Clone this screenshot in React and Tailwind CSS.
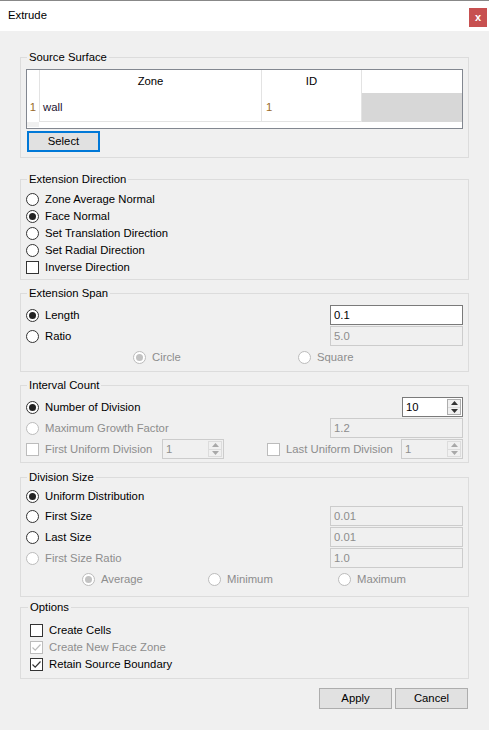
import { useState } from "react";

const FONT = "font-['Liberation_Sans',Arial,sans-serif]";

function Radio({ checked, disabled }) {
  return (
    <span
      className={`flex h-[13px] w-[13px] shrink-0 items-center justify-center rounded-full border bg-white ${
        disabled ? "border-[#bcbcbc]" : "border-[#333333]"
      }`}
    >
      {checked && (
        <span
          className={`h-[7px] w-[7px] rounded-full ${
            disabled ? "bg-[#c2c2c2]" : "bg-[#222222]"
          }`}
        />
      )}
    </span>
  );
}

function Check({ checked, disabled }) {
  return (
    <span
      className={`flex h-[13px] w-[13px] shrink-0 items-center justify-center border bg-white ${
        disabled ? "border-[#bcbcbc]" : "border-[#333333]"
      }`}
    >
      {checked && (
        <svg width="11" height="11" viewBox="0 0 11 11">
          <polyline
            points="1.5,5.5 4.2,8.2 9.5,2.5"
            fill="none"
            stroke={disabled ? "#bcbcbc" : "#333333"}
            strokeWidth="1.2"
          />
        </svg>
      )}
    </span>
  );
}

function Option({ type = "radio", checked, disabled, label, className = "" }) {
  return (
    <div className={`flex items-center gap-[6px] ${className}`}>
      {type === "radio" ? (
        <Radio checked={checked} disabled={disabled} />
      ) : (
        <Check checked={checked} disabled={disabled} />
      )}
      <span className={disabled ? "text-[#8d8d8d]" : "text-black"}>{label}</span>
    </div>
  );
}

function TextBox({ value, active }) {
  return (
    <div
      className={`flex h-[20px] w-[133px] items-center border px-[3px] ${
        active
          ? "border-[#7a7a7a] bg-white text-black"
          : "border-[#cccccc] bg-[#f0f0f0] text-[#8d8d8d]"
      }`}
    >
      {value}
    </div>
  );
}

function Spinner({ value, active, width = "w-[61px]" }) {
  const arrow = active ? "#333333" : "#a8a8a8";
  return (
    <div
      className={`flex h-[20px] ${width} items-center justify-between border pl-[3px] pr-[1px] ${
        active
          ? "border-[#7a7a7a] bg-white text-black"
          : "border-[#cccccc] bg-[#f0f0f0] text-[#8d8d8d]"
      }`}
    >
      <span>{value}</span>
      <div
        className={`flex h-[16px] w-[14px] flex-col border ${
          active ? "border-[#adadad] bg-[#f0f0f0]" : "border-[#dcdcdc] bg-[#f0f0f0]"
        }`}
      >
        <div className="flex flex-1 items-center justify-center border-b border-[#dcdcdc]">
          <svg width="7" height="4" viewBox="0 0 7 4">
            <polygon points="0,4 7,4 3.5,0" fill={arrow} />
          </svg>
        </div>
        <div className="flex flex-1 items-center justify-center">
          <svg width="7" height="4" viewBox="0 0 7 4">
            <polygon points="0,0 7,0 3.5,4" fill={arrow} />
          </svg>
        </div>
      </div>
    </div>
  );
}

function Group({ title, className = "", pad = "px-[5px]", legendPad = "ml-[1px]", children }) {
  return (
    <fieldset className={`ml-[20px] w-[449px] border border-[#dcdcdc] ${pad} ${className}`}>
      <legend className={`${legendPad} px-[2px] leading-[15px]`}>{title}</legend>
      {children}
    </fieldset>
  );
}

export default function App() {
  const [direction, setDirection] = useState("face");

  return (
    <div className={`${FONT} h-[730px] w-[489px] bg-[#f0f0f0] text-[11.3px] text-black`}>
      {/* title bar */}
      <div className="flex h-[31px] items-center justify-between border-t border-[#888888] bg-white pl-[8px] pr-[2px]">
        <span className="pb-[1px]">Extrude</span>
        <button className="mt-[2px] flex h-[19px] w-[18px] items-center justify-center bg-[#c75050] text-[11px] font-bold leading-none text-white">
          x
        </button>
      </div>

      <Group title="Source Surface" className="mt-[19px] pt-[4px] pb-[5px]">
        <div className="h-[60px] w-[437px] border border-[#828790] bg-white">
          <div className="grid grid-cols-[12px_1px_221px_1px_99px_1px_100px]">
            {/* header */}
            <div className="h-[23px]" />
            <div className="bg-[#e3e3e3]" />
            <div className="flex items-center justify-center">Zone</div>
            <div className="bg-[#e3e3e3]" />
            <div className="flex items-center justify-center">ID</div>
            <div className="bg-[#e3e3e3]" />
            <div />
            {/* row */}
            <div className="flex h-[29px] items-center justify-center text-[#9a6a2a]">1</div>
            <div className="bg-[#e3e3e3]" />
            <div className="flex items-center border-b border-[#e3e3e3] pl-[3px] text-[#1a1030]">wall</div>
            <div className="bg-[#e3e3e3]" />
            <div className="flex items-center border-b border-[#e3e3e3] pl-[4px] text-[#9a6a2a]">1</div>
            <div className="bg-[#e3e3e3]" />
            <div className="bg-[#d7d7d7]" />
            {/* filler */}
            <div className="h-[5px] bg-[#f0f0f0]" />
            <div />
            <div />
            <div />
            <div />
            <div />
            <div />
          </div>
        </div>
        <button className="ml-[1px] mt-[2px] flex h-[21px] w-[73px] items-center justify-center border-2 border-[#0078d7] bg-[#e1e1e1]">
          Select
        </button>
      </Group>

      <Group title="Extension Direction" className="mt-[14px] pt-[4px] pb-[3px]">
        {[
          ["zone", "Zone Average Normal"],
          ["face", "Face Normal"],
          ["trans", "Set Translation Direction"],
          ["radial", "Set Radial Direction"],
        ].map(([key, label]) => (
          <div key={key} onClick={() => setDirection(key)} className="cursor-default">
            <Option checked={direction === key} label={label} className="h-[17px]" />
          </div>
        ))}
        <Option type="check" label="Inverse Direction" className="h-[17px]" />
      </Group>

      <Group title="Extension Span" className="mt-[6px] pt-[4px] pb-[3px]">
        <div className="flex h-[21px] items-start justify-between">
          <Option checked label="Length" className="h-[20px]" />
          <TextBox value="0.1" active />
        </div>
        <div className="flex h-[21px] items-start justify-between">
          <Option label="Ratio" className="h-[20px]" />
          <TextBox value="5.0" />
        </div>
        <div className="flex h-[21px] items-center pl-[107px]">
          <Option checked disabled label="Circle" className="w-[165px]" />
          <Option disabled label="Square" />
        </div>
      </Group>

      <Group title="Interval Count" className="mt-[6px] pt-[4px] pb-[2px]">
        <div className="flex h-[21px] items-start justify-between">
          <Option checked label="Number of Division" className="h-[20px]" />
          <Spinner value="10" active />
        </div>
        <div className="flex h-[21px] items-start justify-between">
          <Option disabled label="Maximum Growth Factor" className="h-[20px]" />
          <TextBox value="1.2" />
        </div>
        <div className="flex h-[21px] items-start justify-between">
          <div className="flex w-[198px] items-center justify-between">
            <Option type="check" disabled label="First Uniform Division" className="h-[20px]" />
            <Spinner value="1" width="w-[62px]" />
          </div>
          <div className="flex w-[196px] items-center justify-between">
            <Option type="check" disabled label="Last Uniform Division" className="h-[20px]" />
            <Spinner value="1" width="w-[62px]" />
          </div>
        </div>
      </Group>

      <Group title="Division Size" className="mt-[7px] pt-[1px] pb-[6px]">
        <Option checked label="Uniform Distribution" className="h-[20px]" />
        {[
          ["First Size", "0.01", false],
          ["Last Size", "0.01", false],
          ["First Size Ratio", "1.0", true],
        ].map(([label, value, disabled]) => (
          <div key={label} className="flex h-[21px] items-start justify-between">
            <Option disabled={disabled} label={label} className="h-[20px]" />
            <TextBox value={value} />
          </div>
        ))}
        <div className="flex h-[21px] items-center pl-[56px]">
          <Option checked disabled label="Average" className="w-[126px]" />
          <Option disabled label="Minimum" className="w-[130px]" />
          <Option disabled label="Maximum" />
        </div>
      </Group>

      <Group
        title="Options"
        className="mt-[3px] pt-[7px] pb-[5px]"
        pad="pl-[6px] pr-[5px]"
        legendPad="ml-[1px]"
      >
        <div className="pl-[3px]">
          <Option type="check" label="Create Cells" className="h-[17px]" />
          <Option type="check" checked disabled label="Create New Face Zone" className="h-[17px]" />
          <Option type="check" checked label="Retain Source Boundary" className="h-[17px]" />
        </div>
      </Group>

      <div className="mt-[9px] flex w-[468px] justify-end gap-[3px]">
        <button className="flex h-[21px] w-[73px] items-center justify-center border border-[#adadad] bg-[#e1e1e1]">
          Apply
        </button>
        <button className="flex h-[21px] w-[73px] items-center justify-center border border-[#adadad] bg-[#e1e1e1]">
          Cancel
        </button>
      </div>
    </div>
  );
}
